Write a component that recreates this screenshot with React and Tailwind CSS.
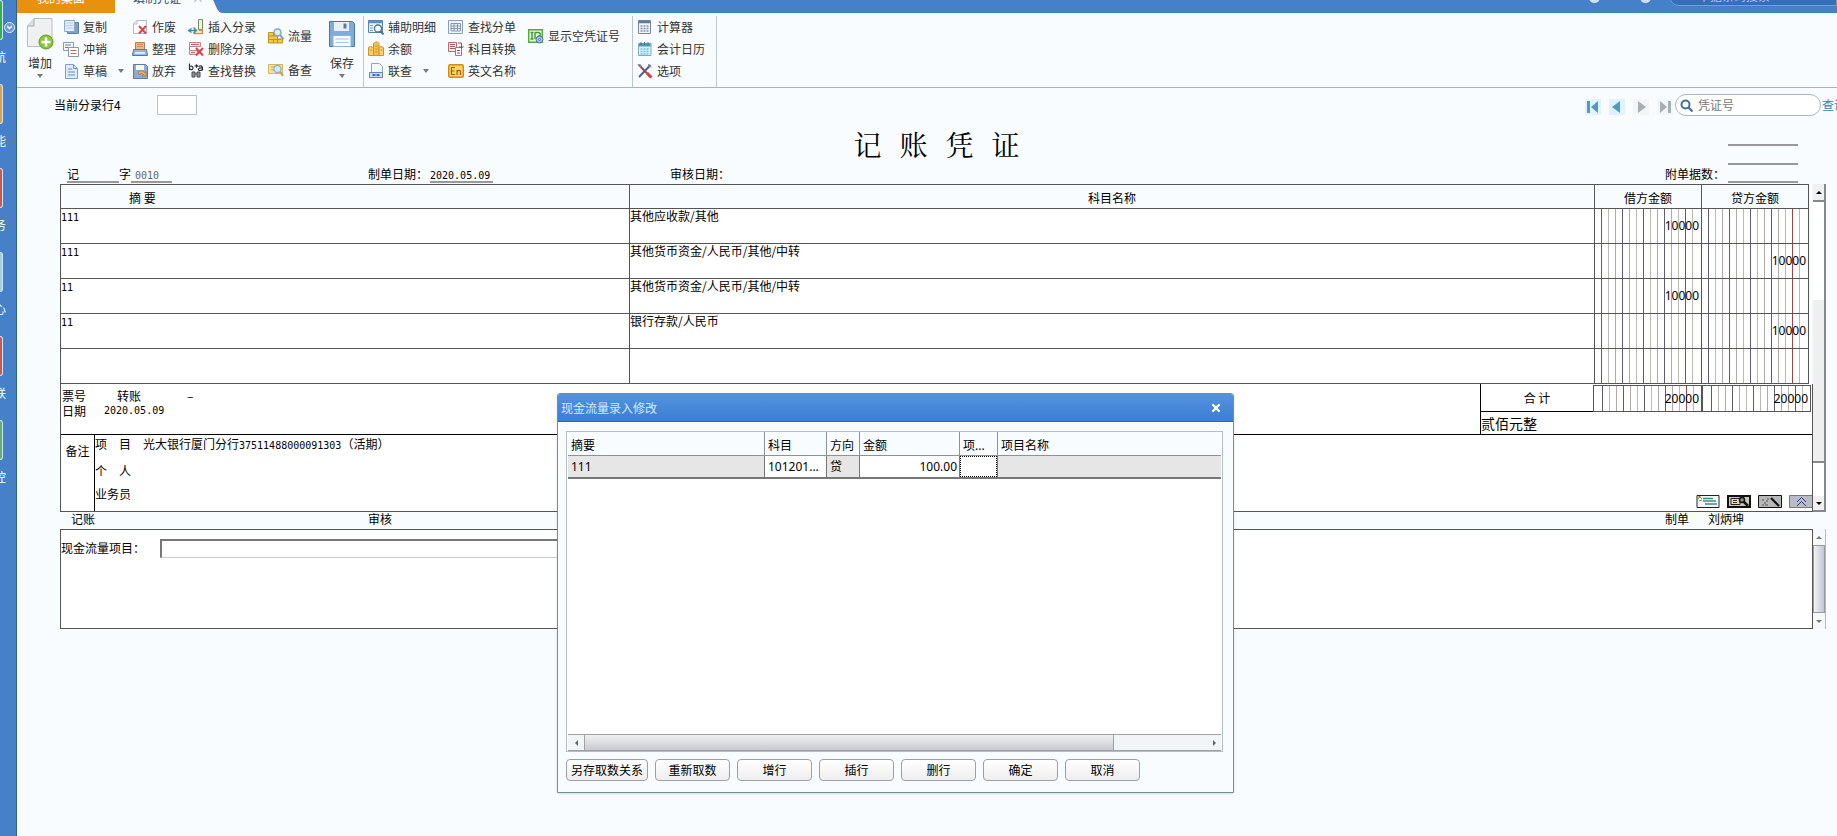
import React from "react";

const svg = { width: 16, height: 16, viewBox: "0 0 16 16", fill: "none", "aria-hidden": true };

const RedCross = ({ x = 7, y = 7 }) => (
  <path d={`M${x} ${y}l7 7.500M${x + 7} ${y}l-7 7.500`} stroke="#d9444a" strokeWidth="2" />
);

const icons = {
  copy: (
    <svg {...svg}>
      <path d="M4.500 3.500h11v11h-11z" fill="#7f9fd0" stroke="#5f7fab" />
      <path d="M1.500 1.500h10v11h-10z" fill="#e4eefb" stroke="#8aa6cf" />
      <path d="M3 4h7M3 6.500h7M3 9h7" stroke="#b5cbe8" />
    </svg>
  ),
  offset: (
    <svg {...svg}>
      <path d="M.500 1.500h10v8h-10z" fill="#f4f7fb" stroke="#8a97a8" />
      <path d="M2 4h6M2 6.500h4" stroke="#6d7d92" />
      <path d="M5.500 6.500h10v9h-10z" fill="#fff" stroke="#8a97a8" />
      <path d="M7.500 9.500h6M7.500 12.500h6" stroke="#c96a5c" />
    </svg>
  ),
  draft: (
    <svg {...svg}>
      <path d="M2.500 1.500h8l4 4v10h-12z" fill="#dceafa" stroke="#7d9fca" />
      <path d="M10.500 1.500v4h4M5 6h4M5 9h7M5 12h7" stroke="#6d92c2" />
    </svg>
  ),
  voidDoc: (
    <svg {...svg}>
      <path d="M5 1.500h9.500v13H1.500V5z" fill="#fff" stroke="#b3b8c0" />
      <path d="M5 1.500V5H1.500" stroke="#b3b8c0" />
      <RedCross />
    </svg>
  ),
  tidy: (
    <svg {...svg}>
      <path d="M3.500 8V1.500h9V8" fill="#e8bd95" stroke="#b27f50" />
      <path d="M5 3.500h6M5 5.500h6" stroke="#c98e5a" />
      <path d="M1.500 8.500h13l1 6H.500z" fill="#9bb4d4" stroke="#5b7696" />
      <path d="M3 12h10" stroke="#f3f7fc" strokeWidth="1.500" />
    </svg>
  ),
  discard: (
    <svg {...svg}>
      <path d="M1.500 1.500h12l2 2v12h-14z" fill="#8fabcf" stroke="#5f7aa0" />
      <path d="M4 2h8v5H4z" fill="#f4f8fd" />
      <path d="M6 9c2-2 6-1 7 1l1-1.500V13h-4l1.500-1.500C10 10 8 10.500 7.500 12z" fill="#f3b04c" stroke="#9c6a20" strokeWidth=".6" />
    </svg>
  ),
  insert: (
    <svg {...svg}>
      <path d="M10.500.500h4v10h-4z" fill="#eaf5d8" stroke="#7c8d5f" />
      <path d="M10.500 11.500h4v3h-8v-5" stroke="#c59c3d" strokeWidth="1.500" />
      <path d="M1 11.500h7M5.500 8.500l3 3-3 3M3.500 9.500l-3 2 3 2" stroke="#3a93a8" strokeWidth="1.400" />
    </svg>
  ),
  deleteRow: (
    <svg {...svg}>
      <path d="M1.500 1.500h11v4h-11zM1.500 9.500h8v4h-8z" fill="#f8e0df" stroke="#c98280" />
      <path d="M3 3.500h8M3 11.500h4M1.500 6v3" stroke="#a87070" />
      <RedCross x={8} y={7} />
    </svg>
  ),
  findReplace: (
    <svg {...svg}>
      <path d="M1.500.500v6.500M1.500 4.500c0-2 3.500-2 3.500.500S1.500 7 1.500 5M10.500 3.500c3-1.500 4 0 4 1.500V7.500M14.500 5c-5-.500-5 2.500-2.500 2.500 1.500 0 2.500-1 2.500-2M6.500 3h2.500M8 1.500L9.500 3 8 4.500" stroke="#333" strokeWidth="1.200" />
      <path d="M4 9h3v5H4zM9 9h3v5H9zM7 11h2" fill="#999" stroke="#444" />
    </svg>
  ),
  flow: (
    <svg {...svg}>
      <circle cx="9.500" cy="4.500" r="3.500" fill="#dcecfb" stroke="#7fa2cf" strokeWidth="1.400" />
      <path d="M12 7l3.500 4" stroke="#7fa2cf" strokeWidth="2" />
      <path d="M.500 4.500h5v3.500h4v3h5v4H.500z" fill="#f2c94a" stroke="#c19416" />
      <path d="M.500 8h6M.500 11.500h12M5.500 11.500V15M9.500 11.500V15" stroke="#c19416" />
    </svg>
  ),
  reference: (
    <svg {...svg}>
      <path d="M.500 2.500h14v9H.500z" fill="#f8e4a5" stroke="#d9b455" />
      <path d="M3 5h3M3 8h3" stroke="#c2a04d" />
      <circle cx="9.500" cy="7" r="3.500" fill="#d8ebf8" stroke="#8fb0cc" strokeWidth="1.300" />
      <path d="M12 9.500l3 4.500" stroke="#d89f36" strokeWidth="2" />
    </svg>
  ),
  detail: (
    <svg {...svg}>
      <path d="M.500 1.500h14v12H.500z" fill="#e9f2fb" stroke="#5882ad" />
      <path d="M.500 3h14" stroke="#5b93bd" strokeWidth="2.500" />
      <path d="M2 6.500h3M2 9h3M2 11.500h3" stroke="#789cc0" />
      <circle cx="10" cy="9.500" r="3.500" fill="#fff" stroke="#4c7296" strokeWidth="1.300" />
      <path d="M12.500 12l3 3.500" stroke="#4c7296" strokeWidth="2" />
    </svg>
  ),
  balance: (
    <svg {...svg}>
      <path d="M5.500 2.500l2-1.500h2l1.500 1.500v12h-5.500z" fill="#f7c14c" stroke="#cf9426" />
      <path d="M.500 6.500l2-1 3 1v8h-5zM11 6.500l2-1 2.500 1v8H11z" fill="#f9cf73" stroke="#cf9426" />
      <path d="M7 5h2.500M7 8h2.500M7 11h2.500M2 9h2M12.500 9h2" stroke="#cf9426" />
    </svg>
  ),
  link: (
    <svg {...svg}>
      <path d="M3.500.500h8l3 3v9h-11z" fill="#f5f9fe" stroke="#8ca5cb" />
      <path d="M1.500 9.500h13v5h-13z" fill="#cfdff3" stroke="#6482b4" />
      <path d="M4.500 12h3M8.500 12h3" stroke="#3f66a5" strokeWidth="2" />
    </svg>
  ),
  findSheet: (
    <svg {...svg}>
      <path d="M.500 1.500h14v13H.500z" fill="#f1f5fa" stroke="#8a9db8" />
      <path d="M3 4.500h9.500v7.500H3zM3 7h9.500M3 9.500h9.500M6 4.500V12M9.500 4.500V12" stroke="#8398b5" />
    </svg>
  ),
  convert: (
    <svg {...svg}>
      <path d="M.500 1.500h8v9h-8z" fill="#fbeaea" stroke="#b86a6f" />
      <path d="M2 3.500h5M2 5.500h5M2 7.500h5" stroke="#a85a62" />
      <path d="M7.500 6.500h6v8h-6z" fill="#fff" stroke="#7d8694" />
      <path d="M10 2h3.500v5M11.500 5l2 2.500 2-2.500M9 9.500h3M9 12h3" stroke="#a54650" />
    </svg>
  ),
  english: (
    <svg {...svg}>
      <rect x=".7" y="1.700" width="14.600" height="12.600" rx="1.500" fill="#fbd468" stroke="#d18a12" strokeWidth="1.400" />
      <path d="M7 4.500H3.500v7H7M3.500 8H6.500M9 12V7M9 8.500c1-1.500 3.500-1.500 3.500.500v3" stroke="#a86404" strokeWidth="1.200" />
    </svg>
  ),
  emptyNo: (
    <svg {...svg}>
      <path d="M.700 1.700h13.600v12.600H.700z" fill="#e5f8dd" stroke="#4caf3c" strokeWidth="1.400" />
      <path d="M2.500 4.500h3M4 4.500V11M2.500 11h3M7 4.500v6.500M7 4.500h3c3 0 3 4 0 4" stroke="#3d9a2f" strokeWidth="1.400" />
      <circle cx="11.500" cy="11.500" r="3.500" fill="#a9c6ea" stroke="#42699e" />
      <circle cx="11.500" cy="11.500" r="1" fill="#fff" stroke="#42699e" />
    </svg>
  ),
  calculator: (
    <svg {...svg}>
      <path d="M1.500 1.500h12v13h-12z" fill="#f3f5fa" stroke="#7a86a0" />
      <path d="M2 3h11" stroke="#6176a6" strokeWidth="2.500" />
      <path d="M3.500 7h2M6.500 7h2M9.500 7h2M3.500 9.500h2M6.500 9.500h2M9.500 9.500h2M3.500 12h2M6.500 12h2M9.500 12h2" stroke="#8392b5" strokeWidth="1.300" />
    </svg>
  ),
  calendar: (
    <svg {...svg}>
      <path d="M1.500 2.500h12.500v12H1.500z" fill="#d9effa" stroke="#7dabc4" />
      <path d="M2 4h11.500" stroke="#4c9bb8" strokeWidth="3" />
      <path d="M4 1v3M7.500 1v3M11 1v3" stroke="#4a6b7d" />
      <path d="M3.500 8h9M3.500 10.500h9M3.500 13h9" stroke="#7cc0de" strokeDasharray="2 1" strokeWidth="1.500" />
    </svg>
  ),
  options: (
    <svg {...svg}>
      <path d="M2 2l11.500 12" stroke="#b83a3a" strokeWidth="2" />
      <path d="M13.500 2L2 14" stroke="#4f6287" strokeWidth="2" />
      <path d="M1 1.500l3 .500-.500 2.500zM11.500 1l.5 2.500 2.500.500" stroke="#7888a5" />
      <path d="M10 10l4.500 4.500" stroke="#c94747" strokeWidth="3" />
    </svg>
  ),
};

const Caret = () => (
  <svg width="6" height="4" viewBox="0 0 6 4" aria-hidden="true">
    <path d="M0 0h6L3 4z" fill="#777" />
  </svg>
);

function Tool({ icon, label, menu }) {
  return (
    <button type="button" className="flex h-[22px] items-center gap-1 whitespace-nowrap">
      {icons[icon]}
      <span>{label}</span>
      {menu && (
        <span className="pl-[7px]">
          <Caret />
        </span>
      )}
    </button>
  );
}

function BigTool({ label, children }) {
  return (
    <button type="button" className="flex w-[28px] flex-col items-center">
      <span className="flex h-[36px] items-center">{children}</span>
      <span className="mt-[2px] whitespace-nowrap leading-[18px]">{label}</span>
      <span className="mt-[2px]">
        <Caret />
      </span>
    </button>
  );
}

const Col = ({ children, className = "" }) => <div className={`flex flex-col ${className}`}>{children}</div>;

const modules = [
  { label: "航", color: "bg-[#35b04a]" },
  { label: "能", color: "bg-[#e0a04a]" },
  { label: "务", color: "bg-[#c9584e]" },
  { label: "心", color: "bg-[#9fd0ee]" },
  { label: "联", color: "bg-[#c9584e]" },
  { label: "控", color: "bg-[#5cb46a]" },
];

function Sidebar() {
  return (
    <aside className="relative w-[17px] shrink-0 border-r border-[#2f6191] bg-[#4680c8]">
      <nav className="flex flex-col" aria-label="模块">
        {modules.map((m) => (
          <a key={m.label} href="#" className="block h-[84px]">
            <span className={`block h-[40px] w-[3px] rounded-r-[3px] border border-l-0 border-[#cfe3f5] ${m.color}`} />
            <span className="mt-[9px] flex w-[6px] justify-end overflow-hidden text-[12px] leading-[16px] text-white">{m.label}</span>
          </a>
        ))}
      </nav>
      <button type="button" aria-label="展开" className="absolute left-[4px] top-[22px] flex size-[11px] items-center justify-center rounded-full border border-[#e7f1fb] bg-[#6d9ad2]">
        <svg width="5" height="5" viewBox="0 0 5 5" fill="none" aria-hidden="true">
          <path d="M0 1l2.500 2.500L5 1" stroke="#fff" strokeWidth="1.500" />
        </svg>
      </button>
    </aside>
  );
}

function TabBar() {
  return (
    <header className="flex h-[13px] items-end overflow-hidden bg-[#4680c8] text-[12px]">
      <button type="button" className="h-[30px] w-[98px] shrink-0 bg-[#e8910f] pr-[10px] text-white">我的桌面</button>
      <div className="flex h-[30px] w-[98px] shrink-0 items-center justify-end gap-[11px] bg-[#f8fcff] pr-[9px] text-[#2d5177]">
        <span>填制凭证</span>
        <button type="button" aria-label="关闭" className="text-[#9aa7b5]">×</button>
      </div>
      <svg width="10" height="13" viewBox="0 0 10 13" className="shrink-0" aria-hidden="true">
        <path d="M0 0c3 5 4 13 10 13H0z" fill="#f8fcff" />
      </svg>
      <div className="ml-auto flex h-[30px] shrink-0 items-center">
        <span className="mb-px mr-[40px] size-[11px] rounded-full bg-[#cfe0f4]" />
        <span className="mb-px mr-[18px] size-[11px] rounded-full bg-[#cfe0f4]" />
        <div className="mb-[4px] flex h-[20px] w-[168px] items-center rounded-l-full border border-[#6f9fd8] bg-[#366fb8] pl-[28px] text-[#a9c8ec]">单据条码搜索</div>
      </div>
    </header>
  );
}

function Toolbar() {
  return (
    <div className="flex h-[75px] border-b border-[#a9b4bd] pt-[3px] text-[12px] text-[#333]" role="toolbar">
      <div className="flex border-r border-[#bcc6ce] pl-[9px] pr-[7px]">
        <BigTool label="增加">
          <svg width="28" height="34" viewBox="0 0 28 34" fill="none" aria-hidden="true">
            <path d="M8 1.500h18v28H1.500V9z" fill="#eef0f1" stroke="#b9bdc1" />
            <path d="M8 1.500V9H1.500" fill="#dfe2e4" stroke="#a9adb1" />
            <circle cx="20" cy="25" r="7" fill="#8cc63c" stroke="#5f9a1f" />
            <path d="M20 20.500v9M15.500 25h9" stroke="#fff" strokeWidth="2.500" />
          </svg>
        </BigTool>
        <Col className="ml-[9px]">
          <Tool icon="copy" label="复制" />
          <Tool icon="offset" label="冲销" />
          <Tool icon="draft" label="草稿" menu />
        </Col>
        <Col className="ml-[8px]">
          <Tool icon="voidDoc" label="作废" />
          <Tool icon="tidy" label="整理" />
          <Tool icon="discard" label="放弃" />
        </Col>
        <Col className="ml-[12px]">
          <Tool icon="insert" label="插入分录" />
          <Tool icon="deleteRow" label="删除分录" />
          <Tool icon="findReplace" label="查找替换" />
        </Col>
        <Col className="ml-[12px] gap-[12px] pt-[9px]">
          <Tool icon="flow" label="流量" />
          <Tool icon="reference" label="备查" />
        </Col>
        <div className="ml-[16px]">
          <BigTool label="保存">
            <svg width="28" height="28" viewBox="0 0 28 28" fill="none" aria-hidden="true">
              <path d="M1.500 1.500h23l2 2v23h-25z" fill="#7fabd8" stroke="#4878a8" />
              <path d="M6 2h15v9H6z" fill="#e8f1fa" />
              <path d="M15.500 3.500h3v5h-3z" fill="#4f7fb0" />
              <path d="M5 15.500h18v11H5z" fill="#f7fafd" stroke="#8eb2d6" />
              <path d="M7.500 19h13M7.500 22.500h13" stroke="#a9c3de" />
            </svg>
          </BigTool>
        </div>
      </div>
      <div className="flex border-r border-[#bcc6ce] pl-[4px] pr-[12px]">
        <Col>
          <Tool icon="detail" label="辅助明细" />
          <Tool icon="balance" label="余额" />
          <Tool icon="link" label="联查" menu />
        </Col>
        <Col className="ml-[12px]">
          <Tool icon="findSheet" label="查找分单" />
          <Tool icon="convert" label="科目转换" />
          <Tool icon="english" label="英文名称" />
        </Col>
        <Col className="ml-[12px] pt-[9px]">
          <Tool icon="emptyNo" label="显示空凭证号" />
        </Col>
      </div>
      <div className="flex border-r border-[#bcc6ce] pl-[4px] pr-[11px]">
        <Col>
          <Tool icon="calculator" label="计算器" />
          <Tool icon="calendar" label="会计日历" />
          <Tool icon="options" label="选项" />
        </Col>
      </div>
    </div>
  );
}

function NavButton({ label, disabled, children }) {
  return (
    <button type="button" aria-label={label} disabled={disabled} className={`flex size-[16px] items-center justify-center ${disabled ? "bg-[#f3f5f6] text-[#a9b0b5]" : "bg-[#e2f2fa] text-[#4f9cc0]"}`}>
      <svg width="12" height="12" viewBox="0 0 12 12" fill="currentColor" aria-hidden="true">
        {children}
      </svg>
    </button>
  );
}

function QueryBar() {
  return (
    <div className="flex h-[34px] items-center">
      <label htmlFor="line" className="text-[12px]">当前分录行4</label>
      <input id="line" className="ml-[36px] h-[20px] w-[40px] border border-[#b9c3cb] bg-white px-1 text-[12px]" />
      <div className="ml-auto flex items-center">
        <div className="mt-[4px] flex gap-[8px] pr-[2px]">
          <NavButton label="首张"><path d="M0 0h3v12H0zM11 0v12L4 6z" /></NavButton>
          <NavButton label="上张"><path d="M9 0v12L1 6z" /></NavButton>
          <NavButton label="下张" disabled><path d="M3 0v12l8-6z" /></NavButton>
          <NavButton label="末张" disabled><path d="M1 0v12l7-6zM9 0h3v12H9z" /></NavButton>
        </div>
        <div className="flex h-[22px] w-[146px] items-center gap-[5px] rounded-full border border-[#aab6be] bg-white pl-[4px]">
          <svg width="13" height="13" viewBox="0 0 13 13" fill="none" aria-hidden="true">
            <circle cx="5.500" cy="5.500" r="4" stroke="#41719b" strokeWidth="2" />
            <path d="M8.500 8.500l4 4" stroke="#41719b" strokeWidth="2.200" />
          </svg>
          <input aria-label="凭证号" placeholder="凭证号" className="w-[110px] bg-transparent text-[12px] outline-none placeholder:text-[#777]" />
        </div>
        <a href="#" className="ml-px w-[15px] overflow-hidden whitespace-nowrap text-[12px] text-[#2f87a8]">查询</a>
      </div>
    </div>
  );
}

const Num = ({ children }) => (
  <span className="font-['DejaVu_Sans_Mono','Noto_Sans_CJK_SC',monospace] text-[10px]">{children}</span>
);

function rule(i) {
  if (i === 13) return "border-[#a04048]";
  if (i === 15) return "border-transparent";
  if (i % 3 === 1) return "border-[#5c5c74]";
  return i % 2 ? "border-[#b3aaa8]" : "border-[#b6bdb0]";
}

function Ruled({ value, className = "" }) {
  return (
    <div className={`relative flex items-center justify-end overflow-hidden pr-[2px] ${className}`}>
      <div className="absolute inset-0 flex justify-start pl-[inherit]" aria-hidden="true">
        {Array.from({ length: 15 }, (_, k) => (
          <span key={k} className={`w-[7px] shrink-0 border-r ${rule(k + 1)}`} />
        ))}
      </div>
      <span className="relative font-['Noto_Sans',sans-serif] text-[12px]">{value}</span>
    </div>
  );
}

const entries = [
  { summary: "111", account: "其他应收款/其他", debit: "10000", credit: "" },
  { summary: "111", account: "其他货币资金/人民币/其他/中转", debit: "", credit: "10000" },
  { summary: "11", account: "其他货币资金/人民币/其他/中转", debit: "10000", credit: "" },
  { summary: "11", account: "银行存款/人民币", debit: "", credit: "10000" },
  { summary: "", account: "", debit: "", credit: "" },
];

function EntryTable() {
  const head = "border-b border-r border-[#555] p-0 pt-[2px] font-normal";
  const cell = "border-b border-r border-[#555] p-0";
  return (
    <div className="pr-[4px]">
      <table className="w-full table-fixed border-separate border-spacing-0 border-l border-t border-[#555] text-[12px]">
        <colgroup>
          <col className="w-[569px]" />
          <col />
          <col className="w-[107px]" />
          <col className="w-[107px]" />
        </colgroup>
        <thead>
          <tr className="h-[24px]">
            <th className={`${head} pl-[68px] text-left`}>摘 要</th>
            <th className={head}>科目名称</th>
            <th className={head}>借方金额</th>
            <th className={head}>贷方金额</th>
          </tr>
        </thead>
        <tbody className="bg-white">
          {entries.map((e, i) => (
            <tr key={i} className="h-[35px]">
              <td className={`${cell} align-top leading-[14px]`}><Num>{e.summary}</Num></td>
              <td className={`${cell} align-top leading-[14px]`}>{e.account}</td>
              <td className={cell}><Ruled value={e.debit} className="h-[34px]" /></td>
              <td className={cell}><Ruled value={e.credit} className="h-[34px]" /></td>
            </tr>
          ))}
        </tbody>
      </table>
    </div>
  );
}

function Meta() {
  return (
    <div className="flex h-[19px] items-start text-[12px] leading-[17px]">
      <div className="flex w-[308px] shrink-0 pl-[7px]">
        <span className="h-[18px] w-[52px] border-b-2 border-[#999]">记</span>
        <span>字</span>
        <span className="h-[18px] w-[41px] border-b-2 border-[#999] pl-[4px] text-[#666]"><Num>0010</Num></span>
      </div>
      <div className="flex w-[302px] shrink-0">
        <span>制单日期：</span>
        <span className="ml-[2px] h-[18px] w-[63px] border-b-2 border-[#999]"><Num>2020.05.09</Num></span>
      </div>
      <div>审核日期：</div>
      <div className="ml-auto flex pr-[15px]">
        <span>附单据数：</span>
        <span className="ml-[3px] h-[18px] w-[70px] border-b-2 border-[#999]" />
      </div>
    </div>
  );
}

function Totals() {
  return (
    <div className="w-[332px] shrink-0 border-l border-black">
      <div className="flex h-[28px]">
        <div className="flex flex-1 items-center justify-center border-b border-black">合 计</div>
        <div className="mt-px w-[109px] border border-[#555]"><Ruled value="20000" className="h-[25px] pl-[2px]" /></div>
        <div className="mr-px mt-px w-[109px] border border-[#555]"><Ruled value="20000" className="h-[25px] pl-[2px]" /></div>
      </div>
      <div className="text-[14px] leading-[22px]">贰佰元整</div>
    </div>
  );
}

function ActionIcons() {
  return (
    <div className="flex items-end gap-[7px] pb-[3px]">
      <button type="button" aria-label="备注">
        <svg width="24" height="13" viewBox="0 0 24 13" fill="none"><path d="M1 .500h22v12H1z" fill="#f2faf7" stroke="#222" /><path d="M7 3.500h10M7 6h13M9 9h12" stroke="#3c8f85" strokeWidth="1.300" /><path d="M1 5l3-3M3 1l3 3M1 2h4M3 6l3-1" stroke="#8b9a2b" /></svg>
      </button>
      <button type="button" aria-label="查看">
        <svg width="24" height="13" viewBox="0 0 24 13" fill="none"><path d="M1 1h22v11H1z" fill="#c9c9bd" stroke="#111" strokeWidth="2" /><path d="M4 3.500h9v6H4z" fill="#ecdf93" stroke="#222" /><path d="M6 5.500h4M6 7.500h4" stroke="#333" /><circle cx="15" cy="5" r="2.500" fill="#8d9298" stroke="#111" strokeWidth="1.500" /><path d="M17 7l4 4" stroke="#111" strokeWidth="2.500" /></svg>
      </button>
      <button type="button" aria-label="编辑">
        <svg width="24" height="13" viewBox="0 0 24 13" fill="none"><path d="M.500.500h23v12H.500z" fill="#b7b7b7" stroke="#111" /><path d="M4 5h2M6 8h2M9 4h2M8 6h2M4 10h2M7 10h3" stroke="#555" /><path d="M13 3l8 8" stroke="#111" strokeWidth="2.200" /></svg>
      </button>
      <button type="button" aria-label="收起">
        <svg width="23" height="13" viewBox="0 0 23 13" fill="none"><path d="M.500.500h23v12H.500z" fill="#b9bcc2" stroke="#777" /><path d="M8 7l4.500-4.500L17 7M8 11l4.500-4.500L17 11" stroke="#333f66" /></svg>
      </button>
    </div>
  );
}

function Details() {
  return (
    <div className="border-x border-b border-[#555] bg-white text-[12px]">
      <div className="flex border-b border-black">
        <div className="flex-1 pl-px pt-[4px] leading-[15px]">
          <div className="flex"><span className="w-[55px]">票号</span><span className="w-[70px]">转账</span><span>–</span></div>
          <div className="flex"><span className="w-[42px]">日期</span><Num>2020.05.09</Num></div>
        </div>
        <Totals />
      </div>
      <div className="flex h-[76px]">
        <div className="w-[34px] shrink-0 border-r border-black pt-[8px] text-center leading-[16px]">备注</div>
        <div className="flex-1">
          <div className="flex h-[27px] leading-[18px]"><span className="w-[48px] whitespace-pre">项　目</span><span>光大银行厦门分行<Num>37511488000091303</Num>（活期）</span></div>
          <div className="h-[23px] leading-[18px]">个　人</div>
          <div className="leading-[18px]">业务员</div>
        </div>
        <ActionIcons />
      </div>
    </div>
  );
}

function ClassicScrollbar() {
  return (
    <div className="flex w-[13px] flex-col border-r-2 border-[#888] bg-white" aria-hidden="true">
      <div className="flex h-[18px] items-center justify-center border-b-2 border-[#888] bg-[#f0f0f0]">
        <svg width="6" height="3" viewBox="0 0 6 3"><path d="M0 3h6L3 0z" fill="#000" /></svg>
      </div>
      <div className="h-[98px]" />
      <div className="flex-1 border-b-2 border-[#888] bg-[#efefef]" />
      <div className="h-[33px]" />
      <div className="flex h-[16px] items-center justify-center border-b-2 border-[#888] bg-[#f0f0f0]">
        <svg width="6" height="3" viewBox="0 0 6 3"><path d="M0 0h6L3 3z" fill="#000" /></svg>
      </div>
    </div>
  );
}

function Voucher() {
  return (
    <section>
      <div className="grid grid-cols-[1fr_auto_1fr] pr-[13px]">
        <div />
        <h1 className="flex h-[43px] items-center gap-[18px] font-['Noto_Serif_CJK_SC','Noto_Sans_CJK_SC',serif] text-[28px] leading-[40px]">
          <span>记</span><span>账</span><span>凭</span><span>证</span>
        </h1>
        <div className="flex flex-col items-end justify-end gap-[17px] pr-[15px]">
          <span className="w-[70px] border-b-2 border-[#999]" />
          <span className="w-[70px] border-b-2 border-[#999]" />
        </div>
      </div>
      <div className="pr-[13px]"><Meta /></div>
      <div className="flex">
        <div className="min-w-0 flex-1">
          <EntryTable />
          <Details />
        </div>
        <ClassicScrollbar />
      </div>
      <div className="flex h-[17px] pr-[13px] text-[12px] leading-[14px]">
        <span className="w-[308px] pl-[11px]">记账</span>
        <span>审核</span>
        <span className="ml-auto pr-[19px]">制单</span>
        <span className="pr-[69px]">刘炳坤</span>
      </div>
    </section>
  );
}

function CashFlowPanel() {
  return (
    <section className="flex h-[100px]">
      <div className="flex flex-1 items-start border border-[#555] bg-white pt-[9px] text-[12px]">
        <label htmlFor="cash" className="w-[99px] leading-[18px]">现金流量项目：</label>
        <input id="cash" className="h-[19px] w-[600px] border border-l-2 border-t-2 border-[#ccc] border-l-[#777] border-t-[#777] bg-white px-1" />
      </div>
      <div className="flex w-[13px] flex-col border-r border-[#b5b9be] bg-[#f7f8f9]" aria-hidden="true">
        <div className="flex h-[16px] items-center justify-center"><svg width="6" height="3" viewBox="0 0 6 3"><path d="M0 3h6L3 0z" fill="#777" /></svg></div>
        <div className="flex-1 border border-[#999] bg-linear-to-r from-[#f1f2f5] to-[#c3c6d4]" />
        <div className="flex h-[16px] items-center justify-center"><svg width="6" height="3" viewBox="0 0 6 3"><path d="M0 0h6L3 3z" fill="#777" /></svg></div>
      </div>
    </section>
  );
}

const actions = ["另存取数关系", "重新取数", "增行", "插行", "删行", "确定", "取消"];

function CashFlowDialog() {
  const head = "border-b border-r border-[#8d9298] p-0 pl-[3px] pt-[5px] text-left font-normal whitespace-nowrap";
  const edge = "border-b-2 border-r border-[#777] p-0";
  const cell = `${edge} pl-[3px] pt-px whitespace-nowrap`;
  return (
    <div role="dialog" aria-labelledby="dialog-title" className="absolute left-[557px] top-[393px] w-[677px] rounded-t-[3px] border border-[#6f8fa0] bg-[#f8fcff] pb-[11px] text-[12px] shadow-sm">
      <div className="flex h-[28px] items-center justify-between rounded-t-[2px] border-b border-[#36699f] bg-linear-to-b from-[#5393de] to-[#3d7dd3] pl-[3px] pr-[13px] text-white">
        <h2 id="dialog-title" className="text-[12px] text-[#d4e8ff]">现金流量录入修改</h2>
        <button type="button" aria-label="关闭">
          <svg width="8" height="8" viewBox="0 0 8 8" aria-hidden="true"><path d="M0 0l8 8M8 0L0 8" stroke="#fff" strokeWidth="2.200" /></svg>
        </button>
      </div>
      <div className="ml-[8px] mr-[10px] mt-[9px] flex h-[321px] flex-col border border-[#b5bcc4] bg-white px-px">
        <table className="w-full table-fixed border-separate border-spacing-0 font-['Noto_Sans','Noto_Sans_CJK_SC',sans-serif]">
          <colgroup>
            <col className="w-[197px]" />
            <col className="w-[62px]" />
            <col className="w-[33px]" />
            <col className="w-[100px]" />
            <col className="w-[38px]" />
            <col />
          </colgroup>
          <thead className="bg-[#f9fcff]">
            <tr className="h-[24px]">
              <th className={head}>摘要</th>
              <th className={head}>科目</th>
              <th className={head}>方向</th>
              <th className={head}>金额</th>
              <th className={head}>项...</th>
              <th className={`${head} border-r-0`}>项目名称</th>
            </tr>
          </thead>
          <tbody>
            <tr className="h-[23px]">
              <td className={`${cell} bg-[#e6e6e6]`}>111</td>
              <td className={cell}>101201...</td>
              <td className={`${cell} bg-[#e6e6e6]`}>贷</td>
              <td className={`${cell} pr-[2px] text-right`}>100.00</td>
              <td className={edge}><input aria-label="项目编码" className="block h-[21px] w-full border border-dotted border-black bg-white outline-none" /></td>
              <td className={`${cell} border-r-0 bg-[#e6e6e6]`} />
            </tr>
          </tbody>
        </table>
        <div className="mt-auto flex h-[17px] border-y border-[#9ea2a8] bg-[#f2f5f7]" aria-hidden="true">
          <div className="flex w-[16px] items-center justify-center"><svg width="3" height="6" viewBox="0 0 3 6"><path d="M3 0v6L0 3z" fill="#666" /></svg></div>
          <div className="w-[530px] border-x border-[#9ea2a8] bg-linear-to-b from-[#f0f0f4] to-[#c9cad2]" />
          <div className="flex flex-1 items-center justify-end pr-[5px]"><svg width="3" height="6" viewBox="0 0 3 6"><path d="M0 0v6l3-3z" fill="#666" /></svg></div>
        </div>
      </div>
      <div className="mt-[7px] flex gap-[7px] px-[8px]">
        {actions.map((a) => (
          <button key={a} type="button" className="h-[22px] min-w-[75px] whitespace-nowrap rounded-[4px] border border-[#9aa0a6] bg-linear-to-b from-white to-[#eeeeee] px-[4px] leading-[20px]">
            {a}
          </button>
        ))}
      </div>
    </div>
  );
}

export default function App() {
  return (
    <div className="relative flex min-h-screen overflow-x-hidden bg-[#f8fcff] font-['Noto_Sans_CJK_SC',sans-serif] text-black">
      <Sidebar />
      <main className="min-w-0 flex-1">
        <TabBar />
        <Toolbar />
        <div className="pl-[37px]"><QueryBar /></div>
        <div className="pl-[43px] pr-[11px]">
          <Voucher />
          <CashFlowPanel />
        </div>
      </main>
      <CashFlowDialog />
    </div>
  );
}
